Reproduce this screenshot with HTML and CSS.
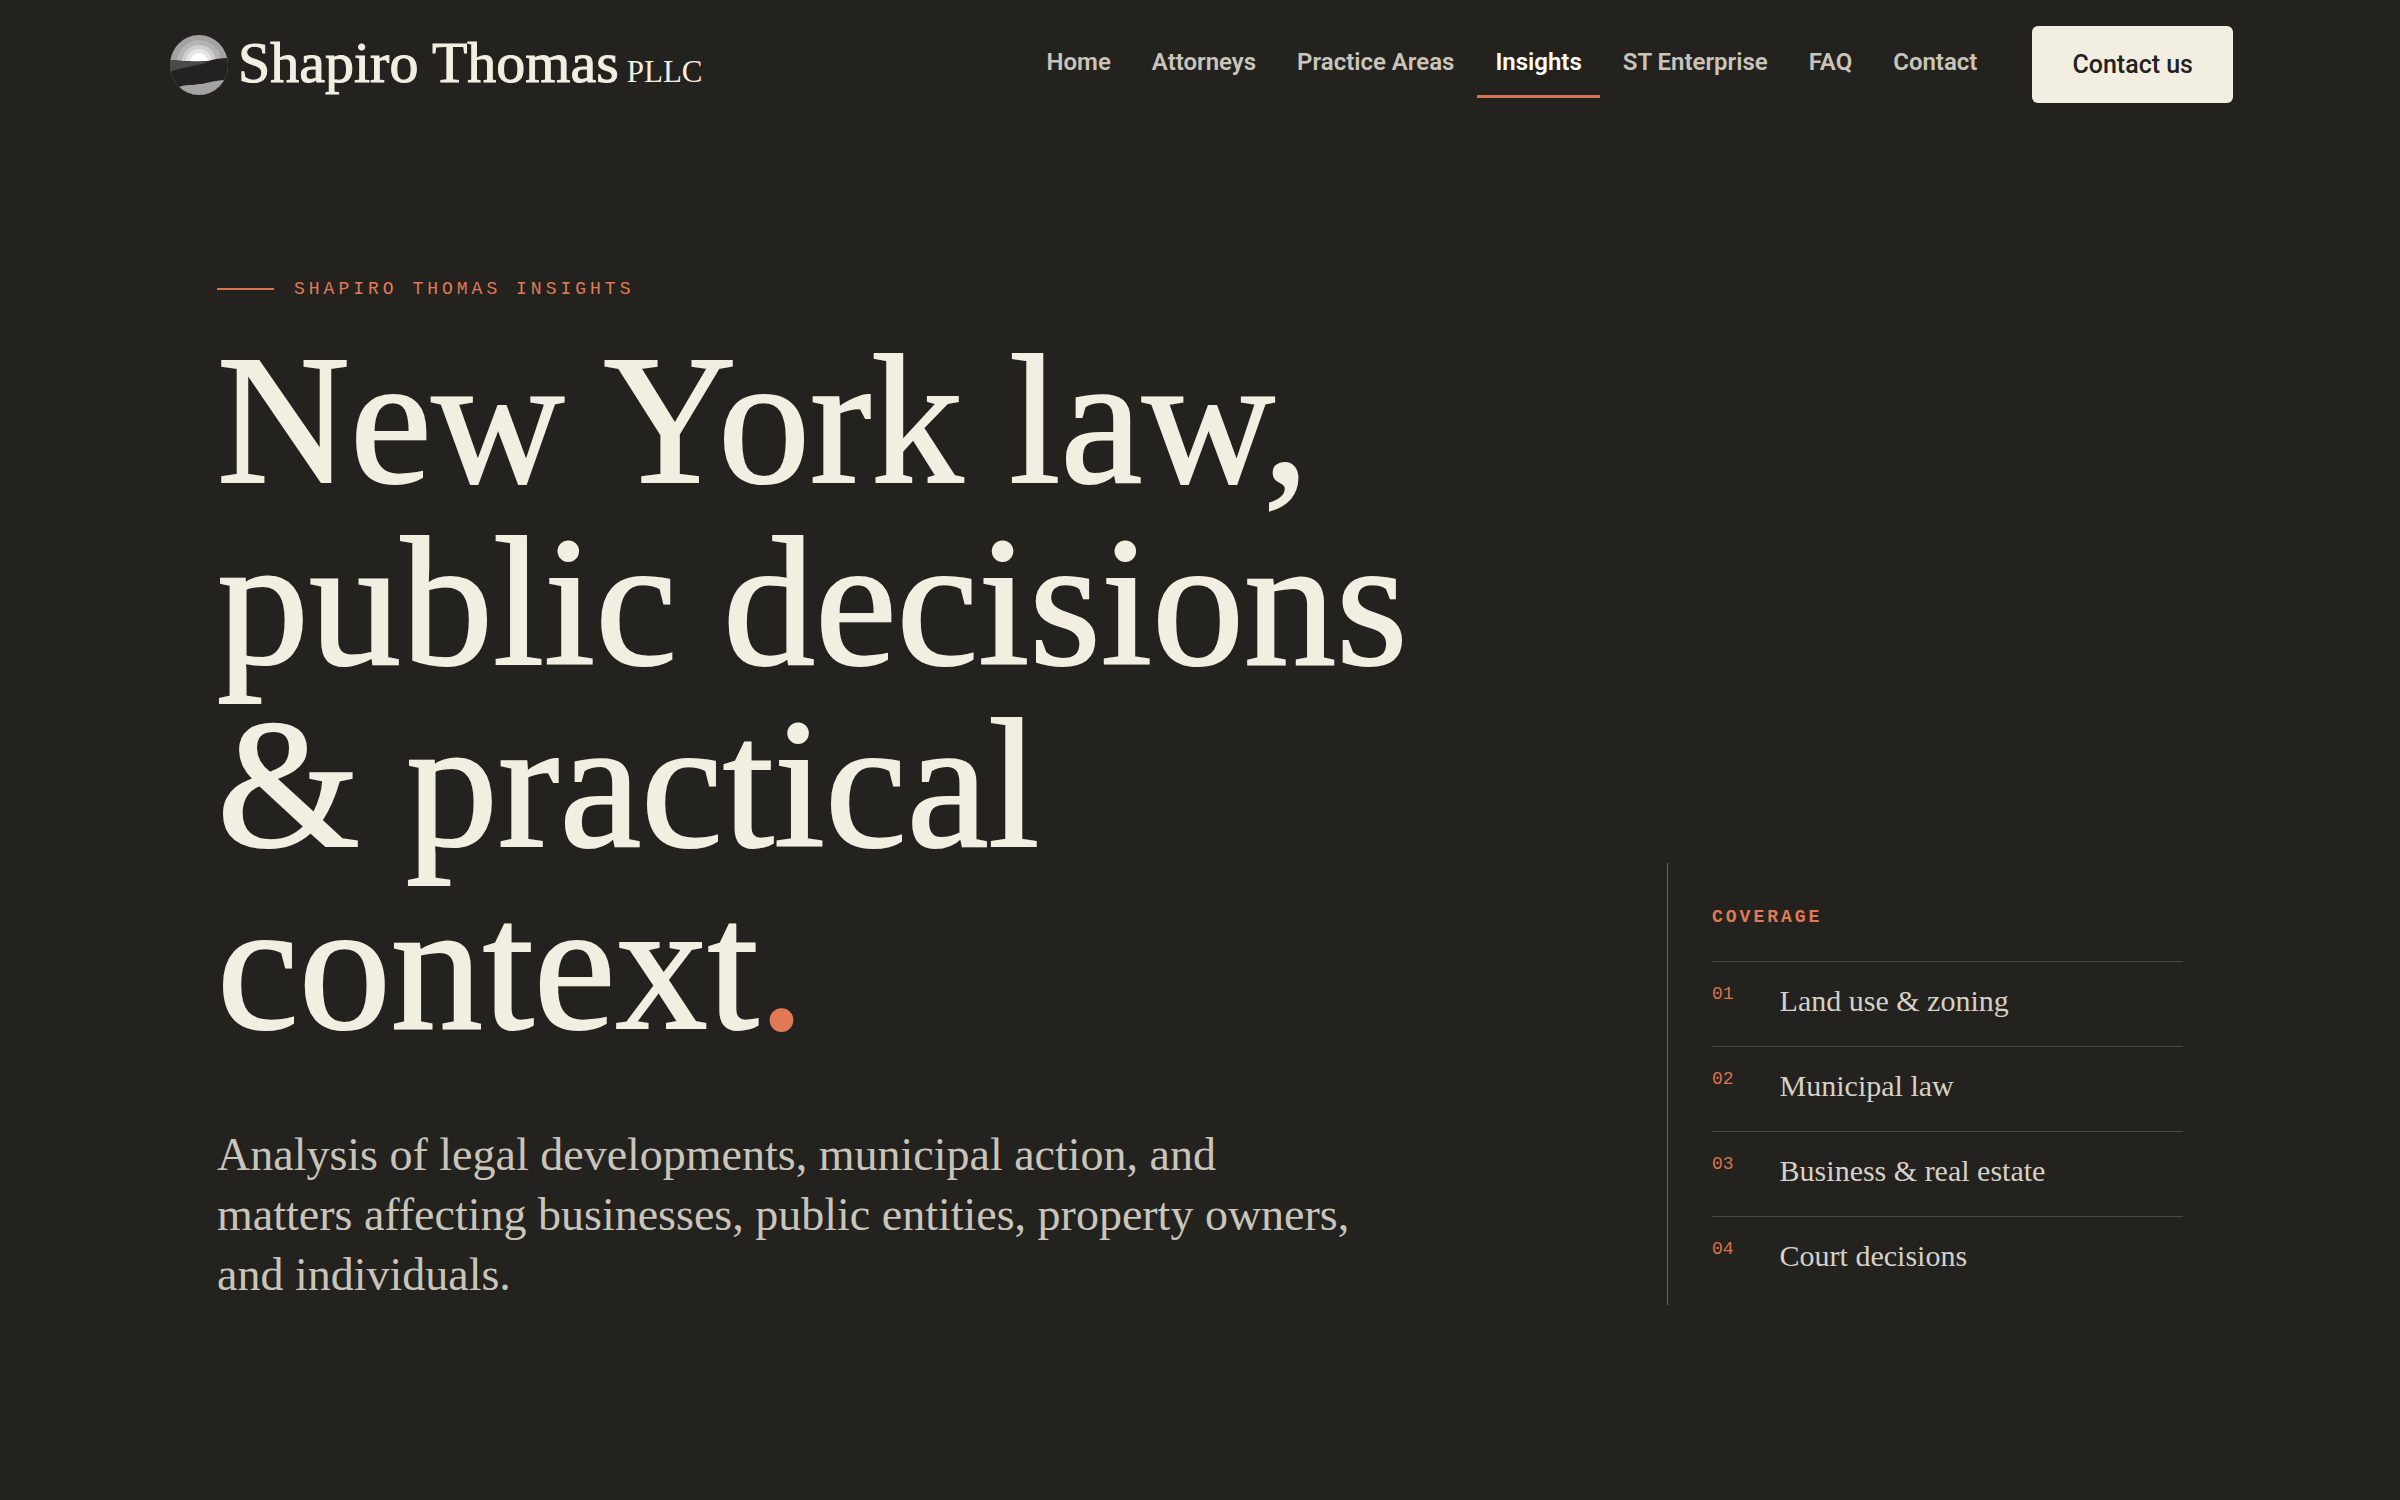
FILE: index.html
```
<!DOCTYPE html>
<html lang="en">
<head>
  <meta charset="UTF-8">
  <meta name="viewport" content="width=device-width, initial-scale=1">
  <title>Insights | Shapiro Thomas PLLC</title>
  <link rel="stylesheet" href="styles.css">
</head>
<body>

  <header class="site-header">
    <a class="logo" href="#">
      <svg class="logo-mark" viewBox="0 0 58 60" aria-hidden="true">
        <clipPath id="disc"><ellipse cx="29" cy="30" rx="29" ry="30"/></clipPath>
        <g clip-path="url(#disc)">
          <rect width="58" height="60" fill="#a3a3a3"/>
          <circle cx="29" cy="27" r="22" fill="#b4b4b4"/>
          <circle cx="29" cy="27" r="17" fill="#cfcfcf"/>
          <circle cx="29" cy="27" r="13" fill="#e6e6e6"/>
          <circle cx="29" cy="27" r="9" fill="#fff"/>
          <path d="M0 25c12 1 25 2 38 1 6-2 13-3 20-3v37H0z" fill="#242123"/>
          <path d="M0 25c12 1 25 2 38 2-8 4-24 4-38 10z" fill="#4a4a4a"/>
          <path d="M9 52c5-2 9-2 14-2 3-1 6-1 9-1 8-2 16-4 26-4v15H9z" fill="#a3a3a3"/>
        </g>
      </svg>
      <span class="logo-name">Shapiro Thomas</span>
      <span class="logo-suffix">PLLC</span>
    </a>

    <nav class="nav" aria-label="Main">
      <a href="#">Home</a>
      <a href="#">Attorneys</a>
      <a href="#">Practice Areas</a>
      <a href="#" class="active" aria-current="page">Insights</a>
      <a href="#">ST Enterprise</a>
      <a href="#">FAQ</a>
      <a href="#">Contact</a>
      <a href="#" class="contact-btn">Contact us</a>
    </nav>
  </header>

  <main class="hero">
    <div class="hero-copy">
      <p class="eyebrow">Shapiro Thomas Insights</p>
      <h1>New York law, public decisions &amp;&nbsp;practical context<span class="dot">.</span></h1>
      <p class="lead">Analysis of legal developments, municipal action, and<br>
        matters affecting businesses, public entities, property owners,<br>
        and individuals.</p>
    </div>

    <aside class="coverage">
      <h2>Coverage</h2>
      <ul>
        <li><span class="num">01</span> Land use &amp; zoning</li>
        <li><span class="num">02</span> Municipal law</li>
        <li><span class="num">03</span> Business &amp; real estate</li>
        <li><span class="num">04</span> Court decisions</li>
      </ul>
    </aside>
  </main>

</body>
</html>
```

FILE: styles.css
```
* {
  box-sizing: border-box;
}

body {
  margin: 0;
  background-color: #24221e;
  color: #f3eee2;
  font-family: "Liberation Serif", serif;
}

a {
  color: inherit;
  text-decoration: none;
}

/* Header */
.site-header {
  display: flex;
  align-items: center;
  justify-content: space-between;
  max-width: 2066px;
  margin: 0 auto;
  padding: 25px 0;
}

.logo {
  display: flex;
  align-items: baseline;
  gap: 8px;
  padding-left: 3px;
  line-height: 64px;
}

.logo-mark {
  width: 58px;
  height: 60px;
  align-self: center;
  margin-right: 2px;
}

.logo-name {
  padding-top: 6px;
  font-size: 58px;
  -webkit-text-stroke: 1px currentColor;
}

.logo-suffix {
  font-size: 31px;
}

.nav {
  display: flex;
  align-items: center;
  gap: 5px;
  font-family: Roboto, sans-serif;
  font-size: 24px;
  font-weight: 600;
  line-height: 32px;
  color: #c9c5bb;
}

.nav a {
  padding: 14px 18px 17px;
  border-bottom: 3px solid transparent;
}

.nav .active {
  color: #fffdf7;
  border-bottom-color: #d9734f;
}

.nav .contact-btn {
  margin-left: 32px;
  padding: 23px 40px 22px;
  border: 0;
  border-radius: 6px;
  background-color: #f3eee2;
  color: #24221e;
  font-size: 25px;
  font-weight: 500;
}

/* Hero */
.hero {
  display: flex;
  align-items: flex-end;
  justify-content: space-between;
  gap: 80px;
  max-width: 1966px;
  margin: 0 auto;
  padding: 146px 0;
}

.eyebrow {
  display: flex;
  align-items: center;
  gap: 20px;
  margin: 0 0 26px;
  font-family: "Liberation Mono", monospace;
  font-size: 18px;
  line-height: 28px;
  letter-spacing: 4px;
  text-transform: uppercase;
  color: #e07a54;
}

.eyebrow::before {
  content: "";
  width: 57px;
  height: 2px;
  background-color: #d9734f;
}

h1 {
  max-width: 1280px;
  margin: 0 0 68px;
  font-size: 184px;
  font-weight: 400;
  line-height: 182px;
  -webkit-text-stroke: 2px currentColor;
}

.dot {
  color: #e07a54;
}

.lead {
  margin: 0;
  font-size: 46px;
  line-height: 60px;
  color: #c9c5bb;
}

/* Coverage list */
.coverage {
  flex: 0 0 516px;
  padding: 40px 0 4px 44px;
  border-left: 1px solid #64625d;
}

.coverage h2 {
  margin: 0 0 30px;
  font-family: "Liberation Mono", monospace;
  font-size: 18px;
  line-height: 28px;
  letter-spacing: 3px;
  text-transform: uppercase;
  color: #e07a54;
}

.coverage ul {
  margin: 0;
  padding: 0;
  list-style: none;
}

.coverage li {
  display: flex;
  gap: 46px;
  padding: 18px 0 24px;
  border-top: 1px solid #4a4843;
  font-size: 30px;
  line-height: 42px;
  color: #d5d1c7;
}

.num {
  font-family: "Liberation Mono", monospace;
  font-size: 18px;
  line-height: 28px;
  color: #d9734f;
}
```
